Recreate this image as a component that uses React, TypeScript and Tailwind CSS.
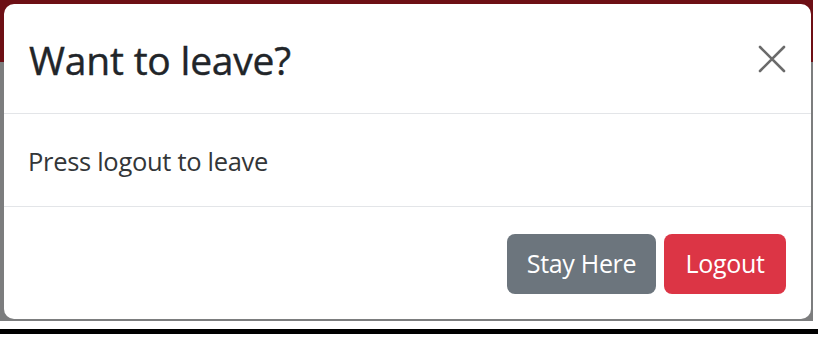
import React from "react";

export default function App() {
  return (
    <div className="w-[836px] h-[351px] bg-white" style={{ fontFamily: '"Open Sans", "Noto Sans", sans-serif' }}>
      <div className="w-[813px] h-[321px] bg-[linear-gradient(to_bottom,#6d0f15_0px,#6d0f15_62px,#7c7d7e_62px)] pt-[4px] pl-[4px] pr-[2px]">
        <div className="w-[807px] h-[315px] bg-white rounded-[10px] flex flex-col">
          <div className="h-[110px] border-b border-[#e3e5e8] pl-[25px] pr-[24px] flex items-center justify-between">
            <h5 className="text-[39px] font-medium text-[#212529] tracking-[-0.2px] leading-none pt-[2px] [-webkit-text-stroke:0.4px_#212529]">Want to leave?</h5>
            <svg width="30" height="30" viewBox="0 0 30 30">
              <path d="M3 3 L27 27 M27 3 L3 27" stroke="#6b6b6b" strokeWidth="2.6" strokeLinecap="round" />
            </svg>
          </div>
          <div className="h-[93px] border-b border-[#e3e5e8] pl-[24px] flex items-center">
            <p className="text-[25.5px] text-[#333638] tracking-[-0.3px] pt-[2px]">Press logout to leave</p>
          </div>
          <div className="flex-1 flex items-center justify-end pr-[25px] gap-[8px] pt-[2px]">
            <button className="w-[149px] h-[60px] rounded-[8px] bg-[#6c757d] text-white text-[25px] tracking-[-0.3px]">Stay Here</button>
            <button className="w-[122px] h-[60px] rounded-[8px] bg-[#dc3545] text-white text-[25px] tracking-[-0.3px]">Logout</button>
          </div>
        </div>
      </div>
      <div className="mt-[8px] w-[818px] h-[5px] bg-black" />
    </div>
  );
}
